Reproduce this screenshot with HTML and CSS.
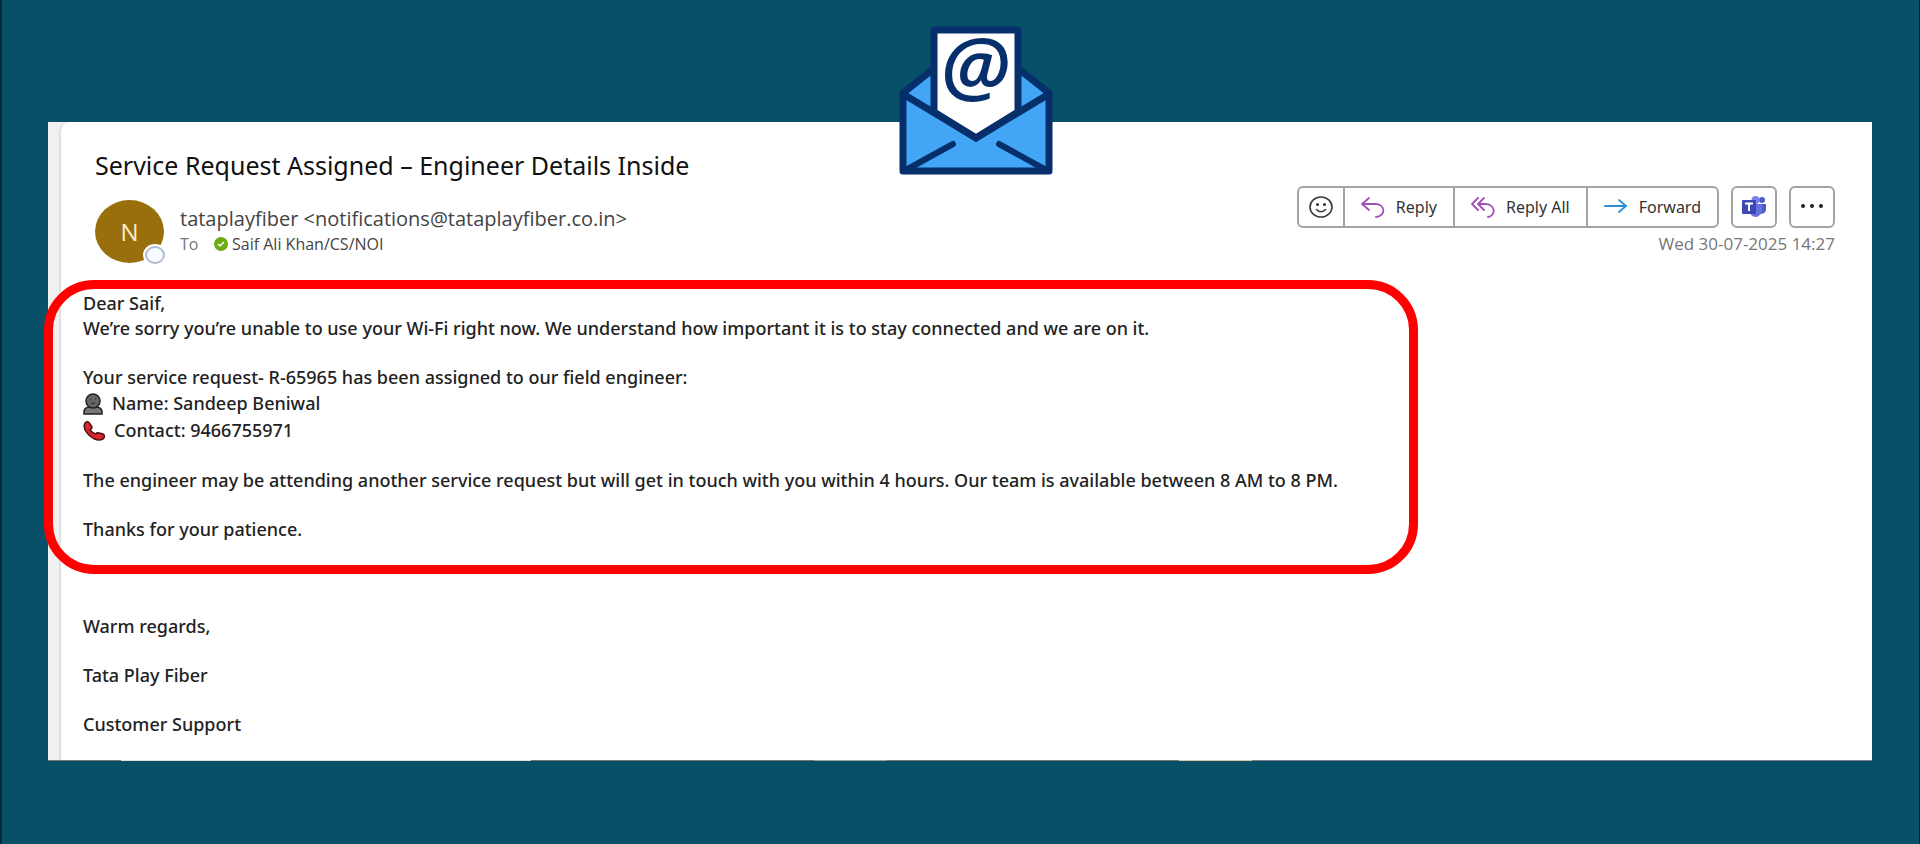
FILE: index.html
```
<!DOCTYPE html>
<html lang="en">
<head>
    <meta charset="UTF-8">
    <meta name="viewport" content="width=device-width, initial-scale=1.0">
    <title>Service Request Assigned</title>
    <link rel="stylesheet" href="styles.css">
</head>
<body>
    <main class="mail">
        <!-- Envelope over the top edge of the mail -->
        <svg class="envelope" viewBox="0 0 154 148" aria-hidden="true">
            <path d="M4 66 L77 8 L150 66 V144 H4 Z" fill="#42a5f5" stroke="#072f6b" stroke-width="7" stroke-linejoin="round"/>
            <path d="M35 85 V3 H119 V85 L77 111 Z" fill="#fff" stroke="#072f6b" stroke-width="7" stroke-linejoin="round"/>
            <path d="M4 67 L77 111 L150 67" fill="none" stroke="#072f6b" stroke-width="7"/>
            <path d="M5 144 L54 117 M149 144 L100 117" fill="none" stroke="#072f6b" stroke-width="6" stroke-linecap="round"/>
            <text x="76" y="68" text-anchor="middle" class="envelope-at">@</text>
        </svg>

        <div class="sheet">
            <header class="mail-header">
                <h1>Service Request Assigned – Engineer Details Inside</h1>
                <div class="header-row">
                    <div class="avatar">
                        N
                        <span class="presence"></span>
                    </div>
                    <div class="sender">
                        <div class="from">tataplayfiber &lt;notifications@tataplayfiber.co.in&gt;</div>
                        <div class="to">
                            <span class="to-label">To</span>
                            <svg class="check" viewBox="0 0 14 14" aria-hidden="true">
                                <circle cx="7" cy="7" r="7" fill="#6bac12"/>
                                <path d="M4 7 L6 9 L10 5" fill="none" stroke="#fff" stroke-width="1.5"/>
                            </svg>
                            <span>Saif Ali Khan/CS/NOI</span>
                        </div>
                    </div>
                    <div class="actions">
                        <div class="toolbar">
                            <div class="button-group">
                                <button class="btn btn-smile" aria-label="React">
                                    <svg width="24" height="22" viewBox="0 0 24 22" fill="none" stroke="#3b3b3b" stroke-width="1.6" stroke-linecap="round">
                                        <ellipse cx="12" cy="11" rx="11" ry="10"/>
                                        <path d="M7.5 13.5 Q12 18 16.5 13.5"/>
                                        <circle cx="8.5" cy="8.5" r="0.8" fill="#3b3b3b"/>
                                        <circle cx="15.5" cy="8.5" r="0.8" fill="#3b3b3b"/>
                                    </svg>
                                </button>
                                <button class="btn">
                                    <svg width="24" height="22" viewBox="0 0 24 22" fill="none" stroke="#a04fb5" stroke-width="1.8" stroke-linecap="round">
                                        <path d="M8 2 L1 8 L8 14 M1 8 H14 C25 8 25 20 15 21"/>
                                    </svg>
                                    Reply
                                </button>
                                <button class="btn">
                                    <svg width="24" height="22" viewBox="0 0 24 22" fill="none" stroke="#a04fb5" stroke-width="1.8" stroke-linecap="round">
                                        <path d="M7 2 L1 8 L7 14 M13 2 L7 8 L13 14 M7 8 H14 C25 8 25 20 17 21"/>
                                    </svg>
                                    Reply All
                                </button>
                                <button class="btn">
                                    <svg width="24" height="22" viewBox="0 0 24 22" fill="none" stroke="#2a8fd6" stroke-width="1.8" stroke-linecap="round">
                                        <path d="M1 10 H22 M15 4 L22 10 L15 16"/>
                                    </svg>
                                    Forward
                                </button>
                            </div>
                            <button class="btn btn-square" aria-label="Share to Teams">
                                <svg width="24" height="22" viewBox="0 0 24 22">
                                    <circle cx="20" cy="4" r="3" fill="#5059c9"/>
                                    <path d="M16 8 H24 V14 Q23 18 18 18 Z" fill="#5059c9"/>
                                    <circle cx="13.5" cy="4" r="4" fill="#7b83eb"/>
                                    <path d="M8 8 H20 V15 Q18 21 13 21 Q8 20 8 15 Z" fill="#6a71dd"/>
                                    <rect x="0" y="4" width="14" height="14" rx="1" fill="#3f46b5"/>
                                    <path d="M3 7.5 H11 M7 7.5 V15" stroke="#fff" stroke-width="2"/>
                                </svg>
                            </button>
                            <button class="btn btn-square" aria-label="More actions">
                                <svg width="24" height="22" viewBox="0 0 24 22" fill="#222">
                                    <circle cx="3" cy="10" r="2"/>
                                    <circle cx="12" cy="10" r="2"/>
                                    <circle cx="21" cy="10" r="2"/>
                                </svg>
                            </button>
                        </div>
                        <div class="date">Wed 30-07-2025 14:27</div>
                    </div>
                </div>
            </header>

            <section class="highlight">
                <p>Dear Saif,<br>We’re sorry you’re unable to use your Wi-Fi right now. We understand how important it is to stay connected and we are on it.</p>
                <div class="engineer">
                    <div>Your service request- R-65965 has been assigned to our field engineer:</div>
                    <div class="detail">
                        <svg width="20" height="22" viewBox="0 0 20 22" aria-hidden="true">
                            <path d="M1 21 V18 Q2 14 7 14 H13 Q18 14 19 18 V21 Z" fill="#777" stroke="#222" stroke-width="1.5"/>
                            <ellipse cx="10" cy="8" rx="7" ry="7" fill="#666" stroke="#222" stroke-width="1.5"/>
                            <path d="M7 6 H8 M12 6 H13 M8 10 Q10 11 12 10" fill="none" stroke="#222"/>
                        </svg>
                        Name: Sandeep Beniwal
                    </div>
                    <div class="detail">
                        <svg width="22" height="20" viewBox="0 0 22 20" aria-hidden="true">
                            <path d="M2 2 Q5 -1 7 3 L9 6 Q9 8 7 9 Q9 12 13 13 Q14 11 16 12 L20 13 Q23 15 20 18 Q14 21 7 15 Q-1 8 2 2 Z" fill="#d9252b" stroke="#4a1013" stroke-width="1.5"/>
                        </svg>
                        Contact: 9466755971
                    </div>
                </div>
                <p>The engineer may be attending another service request but will get in touch with you within 4 hours. Our team is available between 8 AM to 8 PM.</p>
                <p>Thanks for your patience.</p>
            </section>

            <section class="signature">
                <p>Warm regards,</p>
                <p>Tata Play Fiber</p>
                <p>Customer Support</p>
            </section>
        </div>
    </main>
</body>
</html>
```
FILE: styles.css
```
* {
    box-sizing: border-box;
}
body {
    margin: 0;
    min-height: 100vh;
    padding: 122px 47px 83px 46px;
    background-color: #085068;
    border-left: 2px solid #00293a;
    border-right: 1px solid #00293a;
    font-family: "Open Sans", "Noto Sans", sans-serif;
}
h1, p {
    margin: 0;
}
.mail {
    position: relative;
    padding: 0 0 1px 11px;
    background:
        linear-gradient(to right, #777 4%, #ddd 4% 26.5%, #777 26.5% 42%, #9aa5a0 42% 46%, #777 46% 62%, #d8c9a0 62% 66%, #857c8a 66%) bottom / 100% 1px no-repeat,
        #f0f0f0;
}
.envelope {
    position: absolute;
    top: -95px;
    left: calc(50% - 61px);
    width: 154px;
    height: 148px;
    overflow: visible;
}
.envelope-at {
    font-family: "Open Sans", sans-serif;
    font-size: 80px;
    font-weight: 600;
    font-style: italic;
    fill: #072f6b;
}
.sheet {
    background: #fff;
    border-left: 2px solid #e0e0e0;
    border-top-left-radius: 10px;
    padding: 25px 37px 23px 0;
}
.mail-header {
    padding-left: 34px;
}
h1 {
    font-family: "Noto Sans", sans-serif;
    font-size: 25px;
    font-weight: 400;
    line-height: 36px;
    color: #111;
}
.header-row {
    display: flex;
    align-items: flex-start;
}
.avatar {
    position: relative;
    display: flex;
    align-items: center;
    justify-content: center;
    width: 69px;
    height: 63px;
    margin-top: 17px;
    border-radius: 50%;
    background: #986f0b;
    color: #fbeed0;
    font-size: 24px;
}
.presence {
    position: absolute;
    right: -1px;
    bottom: -1px;
    width: 20px;
    height: 18px;
    border-radius: 50%;
    border: 2px solid #b4bccb;
    background: #f6fbff;
    box-shadow: 0 0 0 2px #fff;
}
.sender {
    flex: 1;
    padding: 23px 0 0 16px;
}
.from {
    font-size: 20px;
    line-height: 26px;
    color: #444;
}
.to {
    display: flex;
    align-items: center;
    font-size: 16px;
    line-height: 24px;
    color: #444;
}
.to-label {
    width: 34px;
    color: #777;
}
.check {
    width: 14px;
    height: 14px;
    margin-right: 4px;
}
.actions {
    padding-top: 3px;
}
.toolbar {
    display: flex;
    gap: 12px;
}
.button-group {
    display: flex;
    border: 2px solid #a3a3a3;
    border-radius: 6px;
}
.btn {
    display: flex;
    align-items: center;
    justify-content: center;
    height: 38px;
    padding: 0 16px;
    gap: 11px;
    border: 0;
    background: #fff;
    color: #333;
    font-family: "Noto Sans", sans-serif;
    font-size: 16px;
    cursor: pointer;
}
.button-group .btn + .btn {
    border-left: 2px solid #a3a3a3;
}
.button-group .btn:first-child {
    border-radius: 6px 0 0 6px;
}
.button-group .btn:last-child {
    border-radius: 0 6px 6px 0;
}
.button-group .btn-smile {
    padding: 0 10px;
}
.btn-square {
    width: 46px;
    height: 42px;
    padding: 0;
    border: 2px solid #a3a3a3;
    border-radius: 6px;
}
.date {
    margin-top: 3px;
    text-align: right;
    font-size: 17px;
    line-height: 26px;
    color: #777;
}
.highlight,
.signature {
    font-family: "Noto Sans", sans-serif;
    font-size: 18px;
    font-weight: 500;
    line-height: 25px;
    color: #222;
}
/* Red callout round the message, it runs over the left edge of the mail */
.highlight {
    position: relative;
    display: flex;
    flex-direction: column;
    gap: 24px;
    margin: 17px 417px 0 -17px;
    padding: 2px 30px 23px;
    border: 9px solid #f00;
    border-radius: 50px;
}
.detail {
    display: flex;
    align-items: center;
    gap: 9px;
    height: 27px;
}
.signature {
    display: flex;
    flex-direction: column;
    gap: 24px;
    padding: 40px 0 0 22px;
}
```
